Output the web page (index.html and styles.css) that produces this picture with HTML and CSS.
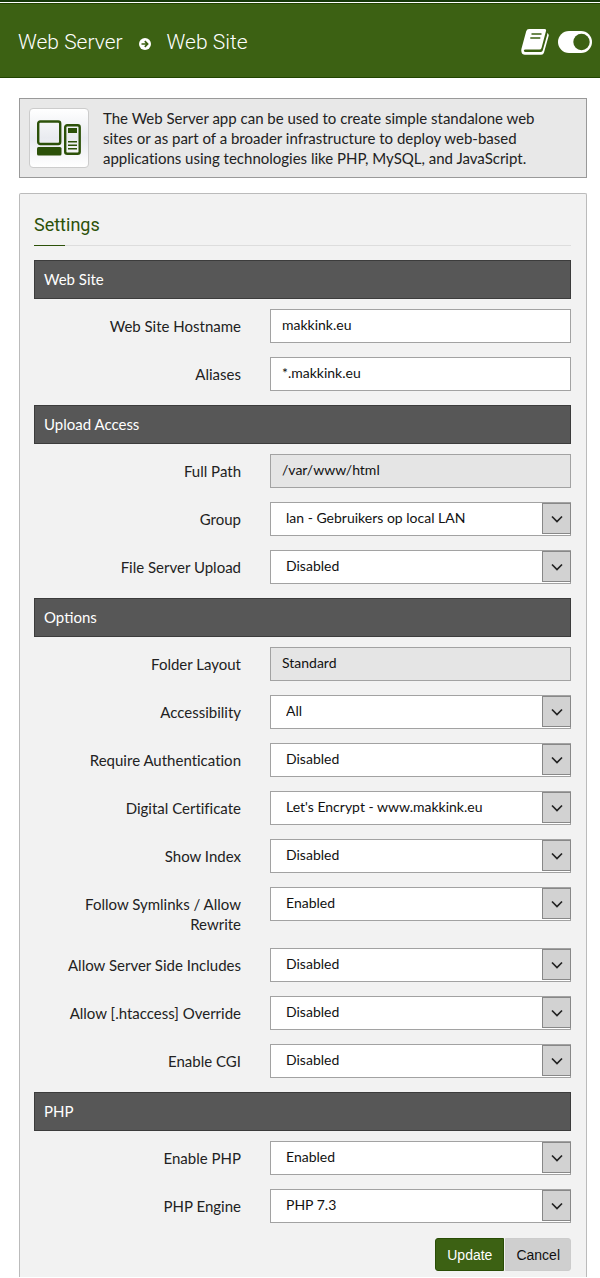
FILE: index.html
```html
<!DOCTYPE html>
<html lang="en">
<head>
<meta charset="utf-8">
<meta name="viewport" content="width=device-width, initial-scale=1">
<title>Web Server - Web Site</title>
<link rel="stylesheet" href="styles.css">
</head>
<body>
<header class="topbar">
  <nav class="crumbs">
    <span>Web Server</span>
    <svg class="crumb-arrow" viewBox="0 0 12 12" aria-hidden="true"><circle cx="6" cy="6" r="6" fill="#fff"/><path d="M2.500 6h6M5.800 3.200L8.600 6 5.800 8.800" fill="none" stroke="#3c6113" stroke-width="1.700"/></svg>
    <span>Web Site</span>
  </nav>
  <div class="tools">
    <button class="icon-button" type="button" aria-label="Documentation">
      <svg width="28" height="26" viewBox="0 0 28 26" aria-hidden="true"><path d="M8 0h15.500q2 0 1.500 2l-4.500 17q-.5 1.500-2 1.500H4.500q-1.800 0-1.600 1.300t1.700 1.200H20q1.300 0 1.700-1.400L26 6.500q.3-1 .2-2.500 2 1 1.400 3L23 23.500q-.6 2.200-2.800 2.200H4Q.8 25.700.4 22.500 0 20.800.8 18.500L5.200 2.200Q5.900 0 8 0z" fill="#fff"/><path d="M10.500 5h10M9.300 9h10" stroke="#3c6113" stroke-width="1.600"/></svg>
    </button>
    <button class="icon-button" type="button" aria-label="Toggle menu">
      <svg width="34" height="22" viewBox="0 0 34 22" aria-hidden="true"><rect width="34" height="22" rx="11" fill="#fff"/><circle cx="23.500" cy="11" r="8.200" fill="#3c6113"/></svg>
    </button>
  </div>
</header>
<main class="content">
  <section class="intro">
    <div class="app-icon">
      <svg width="44" height="36" viewBox="0 0 44 36" aria-hidden="true"><g fill="none" stroke="#2c5109" stroke-width="2.400"><rect x="1.200" y="1.500" width="22" height="22.500" rx="2"/><rect x="28.200" y="5.200" width="14.500" height="28.600" rx="2"/></g><g fill="#2c5109"><rect y="27" width="24.500" height="8.500" rx="1.500"/><rect x="31" y="8" width="9" height="5"/><path d="M31 21h9v1.500h-9zM31 24.500h9V26h-9zM31 28h9v1.500h-9z"/></g></svg>
    </div>
    <p class="intro-text">The Web Server app can be used to create simple standalone web sites or as part of a broader infrastructure to deploy web-based applications using technologies like PHP, MySQL, and JavaScript.</p>
  </section>
  <form class="panel">
    <h1 class="panel-title">Settings</h1>
    <h2 class="group">Web Site</h2>
    <div class="row"><label for="host">Web Site Hostname</label><input class="field" id="host" type="text" value="makkink.eu"></div>
    <div class="row"><label for="aliases">Aliases</label><input class="field" id="aliases" type="text" value="*.makkink.eu"></div>
    <h2 class="group">Upload Access</h2>
    <div class="row"><label for="path">Full Path</label><input class="field" id="path" type="text" value="/var/www/html" readonly></div>
    <div class="row"><label for="group">Group</label><div class="picker"><select class="field" id="group"><option>lan - Gebruikers op local LAN</option></select><span class="drop"></span></div></div>
    <div class="row"><label for="upload">File Server Upload</label><div class="picker"><select class="field" id="upload"><option>Disabled</option></select><span class="drop"></span></div></div>
    <h2 class="group">Options</h2>
    <div class="row"><label for="layout">Folder Layout</label><input class="field" id="layout" type="text" value="Standard" readonly></div>
    <div class="row"><label for="access">Accessibility</label><div class="picker"><select class="field" id="access"><option>All</option></select><span class="drop"></span></div></div>
    <div class="row"><label for="auth">Require Authentication</label><div class="picker"><select class="field" id="auth"><option>Disabled</option></select><span class="drop"></span></div></div>
    <div class="row"><label for="cert">Digital Certificate</label><div class="picker"><select class="field" id="cert"><option>Let's Encrypt - www.makkink.eu</option></select><span class="drop"></span></div></div>
    <div class="row"><label for="index">Show Index</label><div class="picker"><select class="field" id="index"><option>Disabled</option></select><span class="drop"></span></div></div>
    <div class="row"><label for="links">Follow Symlinks / Allow Rewrite</label><div class="picker"><select class="field" id="links"><option>Enabled</option></select><span class="drop"></span></div></div>
    <div class="row"><label for="ssi">Allow Server Side Includes</label><div class="picker"><select class="field" id="ssi"><option>Disabled</option></select><span class="drop"></span></div></div>
    <div class="row"><label for="htaccess">Allow [.htaccess] Override</label><div class="picker"><select class="field" id="htaccess"><option>Disabled</option></select><span class="drop"></span></div></div>
    <div class="row"><label for="cgi">Enable CGI</label><div class="picker"><select class="field" id="cgi"><option>Disabled</option></select><span class="drop"></span></div></div>
    <h2 class="group">PHP</h2>
    <div class="row"><label for="php">Enable PHP</label><div class="picker"><select class="field" id="php"><option>Enabled</option></select><span class="drop"></span></div></div>
    <div class="row"><label for="engine">PHP Engine</label><div class="picker"><select class="field" id="engine"><option>PHP 7.3</option></select><span class="drop"></span></div></div>
    <div class="actions"><button class="btn btn-primary" type="button">Update</button><button class="btn" type="button">Cancel</button></div>
  </form>
</main>
</body>
</html>
```
FILE: styles.css
```css
* { box-sizing: border-box; }
body {
  margin: 0;
  padding-top: 1px;
  background: #fff;
  color: #222;
  font: 15px/20px Lato, sans-serif;
  font-variant-ligatures: none;
  border-top: 2px solid #16380a;
}
.topbar {
  display: flex;
  align-items: center;
  justify-content: space-between;
  height: 75px;
  padding: 3px 8px 0 18px;
  background: #3c6113;
  border-top: 1px solid #214400;
  border-bottom: 1px solid #214400;
}
.crumbs {
  display: flex;
  align-items: center;
  gap: 16px;
  color: #fff;
  font: 300 21px/28px Roboto, sans-serif;
}
.crumb-arrow { width: 12px; height: 12px; margin-top: 4px; }
.tools { display: flex; align-items: center; gap: 9px; }
.icon-button { display: flex; padding: 0; border: 0; background: none; }
.content { display: grid; gap: 15px; padding: 20px 13px 0 19px; }
.intro {
  display: flex;
  gap: 14px;
  min-height: 80px;
  padding: 9px;
  border: 1px solid #999;
  background: #e8e8e8;
}
.app-icon {
  display: flex;
  flex: none;
  align-items: center;
  justify-content: center;
  width: 60px;
  height: 60px;
  border: 1px solid #ccc;
  border-radius: 4px;
  background: linear-gradient(#fff, #e9ebf0 50%, #fff);
}
.intro-text { margin: 0; padding-right: 20px; }
.panel {
  padding: 19px 15px 6px 14px;
  border: 1px solid #bbb;
  border-bottom: 0;
  border-radius: 2px 2px 0 0;
  background: #f2f2f2;
}
.panel-title {
  margin: 0 0 14px;
  padding-bottom: 8px;
  border-bottom: 1px solid #ddd;
  border-image: linear-gradient(90deg, #2c5109 32px, #ddd 32px) 1;
  color: #2c5109;
  font: 400 18px/24px Roboto, sans-serif;
}
.group {
  margin: 0 0 10px;
  padding: 9px;
  border: 1px solid #3c3c3c;
  background: #575757;
  color: #fff;
  font: 400 15px/19px Lato, sans-serif;
}
.row {
  display: grid;
  grid-template-columns: 207px 1fr;
  gap: 29px;
  align-items: start;
  margin-bottom: 14px;
}
.row label { padding-top: 7px; padding-left: 20px; text-align: right; }
.field {
  width: 100%;
  height: 34px;
  padding: 0 11px 3px;
  border: 1px solid #a2a2a2;
  border-radius: 0;
  background: #fff;
  color: #111;
  font: 14px/20px Lato, sans-serif;
}
.field:read-only:not(select) { background: #e5e5e5; }
.picker { position: relative; }
.picker .field { display: block; appearance: none; padding: 0 32px 3px 15px; }
.drop {
  position: absolute;
  top: 1px;
  right: 0;
  width: 29px;
  height: 31px;
  border: 1px solid #888;
  background: #d2d2d2 url("data:image/svg+xml,%3Csvg xmlns='http://www.w3.org/2000/svg' width='12' height='8'%3E%3Cpath d='M1 1.500l5 5 5-5' fill='none' stroke='%23222' stroke-width='1.700'/%3E%3C/svg%3E") center no-repeat;
  pointer-events: none;
}
.actions { display: flex; justify-content: flex-end; gap: 1px; margin-top: 15px; }
.btn {
  height: 33px;
  padding: 0 10px;
  border: 1px solid #ccc;
  border-radius: 0 3px 3px 0;
  background: #cfcfcf;
  color: #111;
  font: 14px/20px "Liberation Sans", sans-serif;
}
.btn-primary { padding: 0 11px; border-color: #294d06; border-radius: 3px 0 0 3px; background: #3c6113; color: #fff; }
```
